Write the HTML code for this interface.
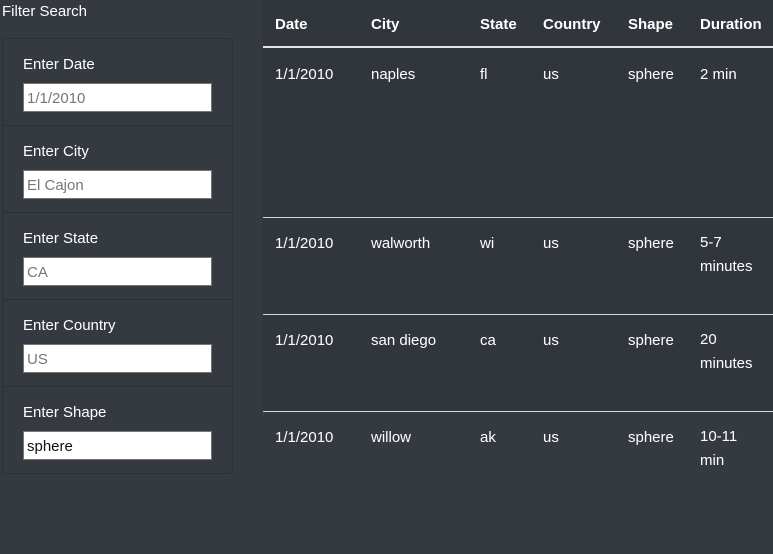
<!DOCTYPE html>
<html><head><meta charset="utf-8"><style>
*{box-sizing:border-box;margin:0;padding:0}
body{width:773px;height:554px;background:#343a40;font-family:"Liberation Sans",sans-serif;color:#fff;position:relative;overflow:hidden;font-size:15px}
.a{position:absolute;white-space:nowrap;z-index:2}
.panel{position:absolute;left:2px;top:38px;width:231px;height:436px;border:1px solid #2c3035;border-radius:4px}
.sep{position:absolute;left:3px;width:229px;height:1px;background:#2c3035}
.inp{position:absolute;z-index:3;left:23px;width:189px;height:29px;background:#ffffff;border:1px solid #767676;color:#777;padding:5px 3px;font-size:15px;line-height:19px}
.tbl{position:absolute;left:263px;top:0;width:510px;height:412px;background:#31363c}
.hl{position:absolute;left:263px;width:510px;height:1px;background:#d8d8d8}
.h{font-weight:bold}
</style></head><body>
<div class="a" style="left:2px;top:3px">Filter Search</div>
<div class="panel"></div>
<div class="sep" style="top:125px"></div>
<div class="sep" style="top:212px"></div>
<div class="sep" style="top:299px"></div>
<div class="sep" style="top:386px"></div>
<div class="a" style="left:23px;top:56px">Enter Date</div>
<div class="inp" style="top:83px">1/1/2010</div>
<div class="a" style="left:23px;top:143px">Enter City</div>
<div class="inp" style="top:170px">El Cajon</div>
<div class="a" style="left:23px;top:230px">Enter State</div>
<div class="inp" style="top:257px">CA</div>
<div class="a" style="left:23px;top:317px">Enter Country</div>
<div class="inp" style="top:344px">US</div>
<div class="a" style="left:23px;top:404px">Enter Shape</div>
<div class="inp" style="top:431px;color:#111">sphere</div>

<div class="tbl"></div>
<div class="hl" style="top:46px;height:2px;background:#e6e6e6"></div>
<div class="hl" style="top:217px"></div>
<div class="hl" style="top:314px"></div>
<div class="hl" style="top:411px"></div>

<div class="a h" style="left:275px;top:16px">Date</div>
<div class="a h" style="left:371px;top:16px">City</div>
<div class="a h" style="left:480px;top:16px">State</div>
<div class="a h" style="left:543px;top:16px">Country</div>
<div class="a h" style="left:628px;top:16px">Shape</div>
<div class="a h" style="left:700px;top:16px">Duration</div>

<div class="a" style="left:275px;top:66px">1/1/2010</div>
<div class="a" style="left:371px;top:66px">naples</div>
<div class="a" style="left:480px;top:66px">fl</div>
<div class="a" style="left:543px;top:66px">us</div>
<div class="a" style="left:628px;top:66px">sphere</div>
<div class="a" style="left:700px;top:66px">2 min</div>

<div class="a" style="left:275px;top:235px">1/1/2010</div>
<div class="a" style="left:371px;top:235px">walworth</div>
<div class="a" style="left:480px;top:235px">wi</div>
<div class="a" style="left:543px;top:235px">us</div>
<div class="a" style="left:628px;top:235px">sphere</div>
<div class="a" style="left:700px;line-height:24px;top:231px">5-7<br>minutes</div>

<div class="a" style="left:275px;top:332px">1/1/2010</div>
<div class="a" style="left:371px;top:332px">san diego</div>
<div class="a" style="left:480px;top:332px">ca</div>
<div class="a" style="left:543px;top:332px">us</div>
<div class="a" style="left:628px;top:332px">sphere</div>
<div class="a" style="left:700px;line-height:24px;top:328px">20<br>minutes</div>

<div class="a" style="left:275px;top:429px">1/1/2010</div>
<div class="a" style="left:371px;top:429px">willow</div>
<div class="a" style="left:480px;top:429px">ak</div>
<div class="a" style="left:543px;top:429px">us</div>
<div class="a" style="left:628px;top:429px">sphere</div>
<div class="a" style="left:700px;line-height:24px;top:425px">10-11<br>min</div>
</body></html>
